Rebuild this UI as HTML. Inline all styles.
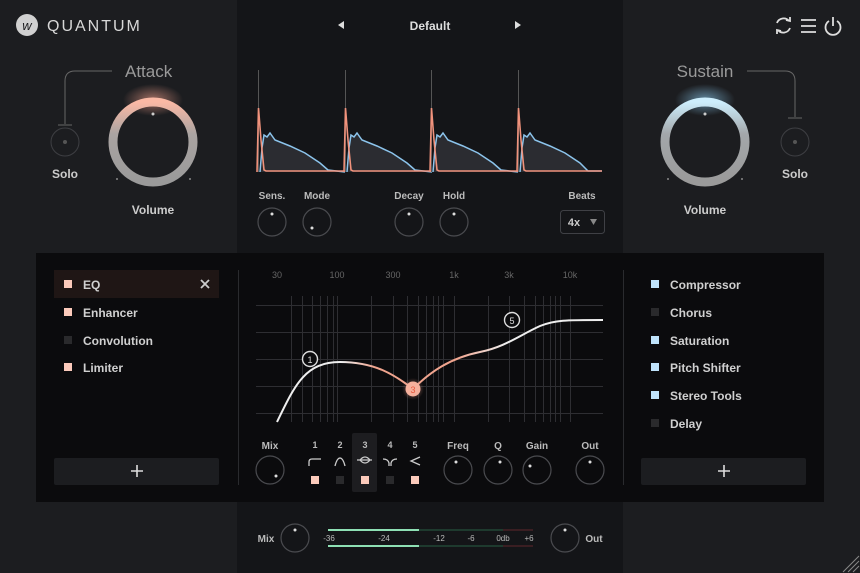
<!DOCTYPE html>
<html><head><meta charset="utf-8"><style>
html,body{margin:0;padding:0;background:#1c1d20;width:860px;height:573px;overflow:hidden}
svg{display:block}
text{font-family:"Liberation Sans",sans-serif}
</style></head><body>
<svg width="860" height="573" viewBox="0 0 860 573" xmlns="http://www.w3.org/2000/svg">
<defs>
<radialGradient id="gr" cx="0.5" cy="0.5" r="0.5"><stop offset="0" stop-color="#f7a38e" stop-opacity="0.6"/><stop offset="1" stop-color="#f7a38e" stop-opacity="0"/></radialGradient>
<radialGradient id="gb" cx="0.5" cy="0.5" r="0.5"><stop offset="0" stop-color="#8fd0f5" stop-opacity="0.6"/><stop offset="1" stop-color="#8fd0f5" stop-opacity="0"/></radialGradient>
<linearGradient id="rr" x1="0" y1="0" x2="0" y2="1"><stop offset="0" stop-color="#fbb9a5"/><stop offset="0.4" stop-color="#aaa4a2"/><stop offset="1" stop-color="#9a9a9a"/></linearGradient>
<linearGradient id="rb" x1="0" y1="0" x2="0" y2="1"><stop offset="0" stop-color="#cdeefd"/><stop offset="0.4" stop-color="#a3a7aa"/><stop offset="1" stop-color="#9a9a9a"/></linearGradient>
<linearGradient id="eqc" x1="0" y1="0" x2="1" y2="0"><stop offset="0" stop-color="#eee"/><stop offset="0.2" stop-color="#eee"/><stop offset="0.3" stop-color="#f0a48e"/><stop offset="0.55" stop-color="#f0a48e"/><stop offset="0.7" stop-color="#eee"/></linearGradient>
</defs>
<rect width="860" height="573" fill="#1c1d20"/>
<rect x="237" y="0" width="386" height="573" fill="#141518"/>
<!-- header -->
<circle cx="27" cy="25" r="11" fill="#d0d0d0"/>
<text x="27" y="30" font-size="13" font-style="italic" font-family="Liberation Serif,serif" fill="#1c1d20" text-anchor="middle">w</text>
<text x="47" y="31" font-size="16" fill="#d8d8d8" letter-spacing="2">QUANTUM</text>
<path d="M338,21 L344,25 L338,29Z" fill="#ddd" transform="translate(682,0) scale(-1,1)"/>
<path d="M515,21 L521,25 L515,29Z" fill="#ddd"/>
<text x="430" y="30" font-size="12" font-weight="bold" fill="#ddd" text-anchor="middle">Default</text>
<g stroke="#ddd" stroke-width="1.8" fill="none">
<path d="M777,23 A7,7 0 0 1 789,21 M790,28 A7,7 0 0 1 778,30"/>
<path d="M786,20 L790,21 L790,17 M781,31 L777,30 L777,34"/>
<path d="M801,20 H816 M801,26 H816 M801,32 H816"/>
<path d="M829,21 A7.5,7.5 0 1 0 837,21 M833,17 V26"/>
</g>
<!-- Attack -->
<path d="M112,71 H75 Q65,71 65,81 V124 M58,125 H72" stroke="#666" fill="none"/>
<text x="125" y="77" font-size="17" fill="#9a9a9a">Attack</text>
<circle cx="65" cy="142" r="14" fill="none" stroke="#3e3f43"/><circle cx="65" cy="142" r="2" fill="#555"/>
<text x="65" y="178" font-size="12" font-weight="bold" fill="#ccc" text-anchor="middle">Solo</text>
<ellipse cx="153" cy="100" rx="30" ry="16" fill="url(#gr)"/>
<circle cx="153" cy="142" r="40" fill="none" stroke="url(#rr)" stroke-width="9"/>
<circle cx="153" cy="114" r="1.5" fill="#ccc"/>
<circle cx="117" cy="179" r="1" fill="#888"/><circle cx="190" cy="179" r="1" fill="#888"/>
<text x="153" y="214" font-size="12" font-weight="bold" fill="#ccc" text-anchor="middle">Volume</text>
<!-- Sustain -->
<path d="M747,71 H785 Q795,71 795,81 V117 M788,118 H802" stroke="#666" fill="none"/>
<text x="705" y="77" font-size="17" fill="#9a9a9a" text-anchor="middle">Sustain</text>
<circle cx="795" cy="142" r="14" fill="none" stroke="#3e3f43"/><circle cx="795" cy="142" r="2" fill="#555"/>
<text x="795" y="178" font-size="12" font-weight="bold" fill="#ccc" text-anchor="middle">Solo</text>
<ellipse cx="705" cy="100" rx="30" ry="16" fill="url(#gb)"/>
<circle cx="705" cy="142" r="40" fill="none" stroke="url(#rb)" stroke-width="9"/>
<circle cx="705" cy="114" r="1.5" fill="#ccc"/>
<circle cx="668" cy="179" r="1" fill="#888"/><circle cx="742" cy="179" r="1" fill="#888"/>
<text x="705" y="214" font-size="12" font-weight="bold" fill="#ccc" text-anchor="middle">Volume</text>
<!-- waveform -->
<g id="w">
<path d="M260,172 L262,148 L264,135 L267,137 L270,133 L275,140 L290,146 L305,153 L320,163 L328,170 L345,172Z" fill="#2b2c31"/>
<line x1="258.5" y1="70" x2="258.5" y2="172" stroke="#555"/>
<path d="M260,172 L262,148 L264,135 L267,137 L270,133 L275,140 L290,146 L305,153 L320,163 L328,170 L345,172" stroke="#8cc4ec" stroke-width="1.5" fill="none"/>
<path d="M257,172 L258.5,108 L261,140 L264,170 L266,171 L345,171" stroke="#f0927c" stroke-width="1.6" fill="none"/>
</g>
<use href="#w" x="87"/><use href="#w" x="173"/>
<g transform="translate(260,0)">
<path d="M260,172 L262,148 L264,135 L267,137 L270,133 L275,140 L290,146 L305,153 L320,163 L328,171 L342,171Z" fill="#2b2c31"/>
<line x1="258.5" y1="70" x2="258.5" y2="172" stroke="#555"/>
<path d="M260,172 L262,148 L264,135 L267,137 L270,133 L275,140 L290,146 L305,153 L320,163 L328,171 L342,171" stroke="#8cc4ec" stroke-width="1.5" fill="none"/>
<path d="M257,172 L258.5,108 L261,140 L264,170 L266,171 L342,171" stroke="#f0927c" stroke-width="1.6" fill="none"/>
</g>
<!-- small knobs -->
<g font-size="10" font-weight="bold" fill="#bbb" text-anchor="middle">
<text x="272" y="199">Sens.</text><text x="317" y="199">Mode</text><text x="409" y="199">Decay</text><text x="454" y="199">Hold</text><text x="582" y="199">Beats</text>
</g>
<g fill="none" stroke="#4a4b4f" stroke-width="1.2">
<circle cx="272" cy="222" r="14"/><circle cx="317" cy="222" r="14"/><circle cx="409" cy="222" r="14"/><circle cx="454" cy="222" r="14"/>
</g>
<g fill="#ddd"><circle cx="272" cy="214" r="1.5"/><circle cx="312" cy="228" r="1.5"/><circle cx="409" cy="214" r="1.5"/><circle cx="454" cy="214" r="1.5"/></g>
<rect x="560.5" y="210.5" width="44" height="23" rx="3" fill="none" stroke="#3f4045"/>
<text x="574" y="226" font-size="11" font-weight="bold" fill="#ccc" text-anchor="middle">4x</text>
<path d="M590,219 H597 L593.5,225Z" fill="#888"/>
<!-- bottom panel -->
<rect x="36" y="253" width="788" height="249" fill="#0b0b0d"/>
<line x1="238.5" y1="270" x2="238.5" y2="485" stroke="#2a2b2e"/>
<line x1="623.5" y1="270" x2="623.5" y2="485" stroke="#2a2b2e"/>
<rect x="54" y="270" width="165" height="28" fill="#1f1615"/>
<g font-size="12" font-weight="bold" fill="#d0d0d0">
<text x="83" y="289">EQ</text><text x="83" y="317">Enhancer</text><text x="83" y="345">Convolution</text><text x="83" y="372">Limiter</text>
<text x="670" y="289">Compressor</text><text x="670" y="317">Chorus</text><text x="670" y="345">Saturation</text><text x="670" y="372">Pitch Shifter</text><text x="670" y="400">Stereo Tools</text><text x="670" y="428">Delay</text>
</g>
<path d="M201,280 L209,288 M209,280 L201,288" stroke="#ccc" stroke-width="1.8"/>
<g fill="#fbcabb"><rect x="64" y="280" width="8" height="8"/><rect x="64" y="308" width="8" height="8"/><rect x="64" y="363" width="8" height="8"/></g>
<rect x="64" y="336" width="8" height="8" fill="#2a2a2c"/>
<g fill="#bfe3fb"><rect x="651" y="280" width="8" height="8"/><rect x="651" y="336" width="8" height="8"/><rect x="651" y="363" width="8" height="8"/><rect x="651" y="391" width="8" height="8"/></g>
<rect x="651" y="308" width="8" height="8" fill="#2a2a2c"/><rect x="651" y="419" width="8" height="8" fill="#2a2a2c"/>
<rect x="54" y="458" width="165" height="27" rx="2" fill="#1c1d20"/>
<rect x="641" y="458" width="165" height="27" rx="2" fill="#1c1d20"/>
<path d="M131,471 H143 M137,465 V477 M718,471 H730 M724,465 V477" stroke="#ddd" stroke-width="1.6"/>
<!-- EQ -->
<g font-size="9" fill="#666" text-anchor="middle">
<text x="277" y="278">30</text><text x="337" y="278">100</text><text x="393" y="278">300</text><text x="454" y="278">1k</text><text x="509" y="278">3k</text><text x="570" y="278">10k</text>
</g>
<g stroke="#2e2e32" stroke-width="1">
<path d="M256,305.5 H603 M256,332.5 H603 M256,359.5 H603 M256,386.5 H603 M256,413.5 H603"/>
<path d="M291.5,296V422 M302.5,296V422 M312.5,296V422 M320.5,296V422 M327.5,296V422 M333.5,296V422 M337.5,296V422 M371.5,296V422 M393.5,296V422 M407.5,296V422 M418.5,296V422 M426.5,296V422 M433.5,296V422 M438.5,296V422 M443.5,296V422 M454.5,296V422 M488.5,296V422 M509.5,296V422 M524.5,296V422 M535.5,296V422 M543.5,296V422 M550.5,296V422 M555.5,296V422 M560.5,296V422 M570.5,296V422"/>
</g>
<path d="M277,422 C295,385 305,362 340,362 C375,362 395,375 413,389 C430,372 450,358 480,352 C505,347 520,335 540,326 C555,320 565,320 603,320" stroke="url(#eqc)" stroke-width="2" fill="none"/>
<circle cx="310" cy="359" r="7.5" fill="#0b0b0d" stroke="#ddd" stroke-width="1.4"/>
<text x="310" y="363" font-size="9" fill="#ddd" text-anchor="middle">1</text>
<circle cx="512" cy="320" r="7.5" fill="#0b0b0d" stroke="#ddd" stroke-width="1.4"/>
<text x="512" y="324" font-size="9" fill="#ddd" text-anchor="middle">5</text>
<circle cx="413" cy="389" r="11" fill="url(#gr)"/>
<circle cx="413" cy="389" r="7.5" fill="#f6b19d"/>
<text x="413" y="393" font-size="9" fill="#e8573c" text-anchor="middle">3</text>
<rect x="352" y="433" width="25" height="59" rx="2" fill="#1d1d20"/>
<g font-size="10" font-weight="bold" fill="#bbb" text-anchor="middle">
<text x="270" y="449">Mix</text><text x="458" y="449">Freq</text><text x="498" y="449">Q</text><text x="537" y="449">Gain</text><text x="590" y="449">Out</text>
<text x="315" y="448" font-size="9">1</text><text x="340" y="448" font-size="9">2</text><text x="365" y="448" font-size="9">3</text><text x="390" y="448" font-size="9">4</text><text x="415" y="448" font-size="9">5</text>
</g>
<g stroke="#ccc" stroke-width="1.3" fill="none">
<path d="M309,466 V462 Q309,459 312,459 H321"/>
<path d="M335,466 Q337,458 340,458 Q343,458 345,466"/>
<path d="M357,460 H372 M360,460 Q365,454 370,460 Q365,466 360,460"/>
<path d="M383,459 Q388,459 389,463 L389,466 M397,459 Q392,459 391,463 L391,466"/>
<path d="M420,457 L411,461 L420,465"/>
</g>
<g fill="#fbcabb"><rect x="311" y="476" width="8" height="8"/><rect x="361" y="476" width="8" height="8"/><rect x="411" y="476" width="8" height="8"/></g>
<g fill="#2a2a2c"><rect x="336" y="476" width="8" height="8"/><rect x="386" y="476" width="8" height="8"/></g>
<g fill="none" stroke="#4a4b4f" stroke-width="1.2">
<circle cx="270" cy="470" r="14"/><circle cx="458" cy="470" r="14"/><circle cx="498" cy="470" r="14"/><circle cx="537" cy="470" r="14"/><circle cx="590" cy="470" r="14"/>
</g>
<g fill="#ddd"><circle cx="276" cy="476" r="1.5"/><circle cx="456" cy="462" r="1.5"/><circle cx="500" cy="462" r="1.5"/><circle cx="530" cy="466" r="1.5"/><circle cx="590" cy="462" r="1.5"/></g>
<!-- footer -->
<text x="266" y="542" font-size="10" font-weight="bold" fill="#bbb" text-anchor="middle">Mix</text>
<text x="594" y="542" font-size="10" font-weight="bold" fill="#bbb" text-anchor="middle">Out</text>
<circle cx="295" cy="538" r="14" fill="none" stroke="#4a4b4f" stroke-width="1.2"/><circle cx="295" cy="530" r="1.5" fill="#ddd"/>
<circle cx="565" cy="538" r="14" fill="none" stroke="#4a4b4f" stroke-width="1.2"/><circle cx="565" cy="530" r="1.5" fill="#ddd"/>
<g stroke-width="2">
<path d="M328,530 H419 M328,546 H419" stroke="#8ee0b4"/>
<path d="M419,530 H503 M419,546 H503" stroke="#1e3a2e"/>
<path d="M503,530 H533 M503,546 H533" stroke="#3a1e22"/>
</g>
<g font-size="8" fill="#bbb" text-anchor="middle">
<text x="329" y="541">-36</text><text x="384" y="541">-24</text><text x="439" y="541">-12</text><text x="471" y="541">-6</text><text x="503" y="541">0db</text><text x="529" y="541">+6</text>
</g>
<path d="M843,572 L859,556 M848,572 L859,561 M853,572 L859,566" stroke="#888"/>
</svg>
</body></html>
